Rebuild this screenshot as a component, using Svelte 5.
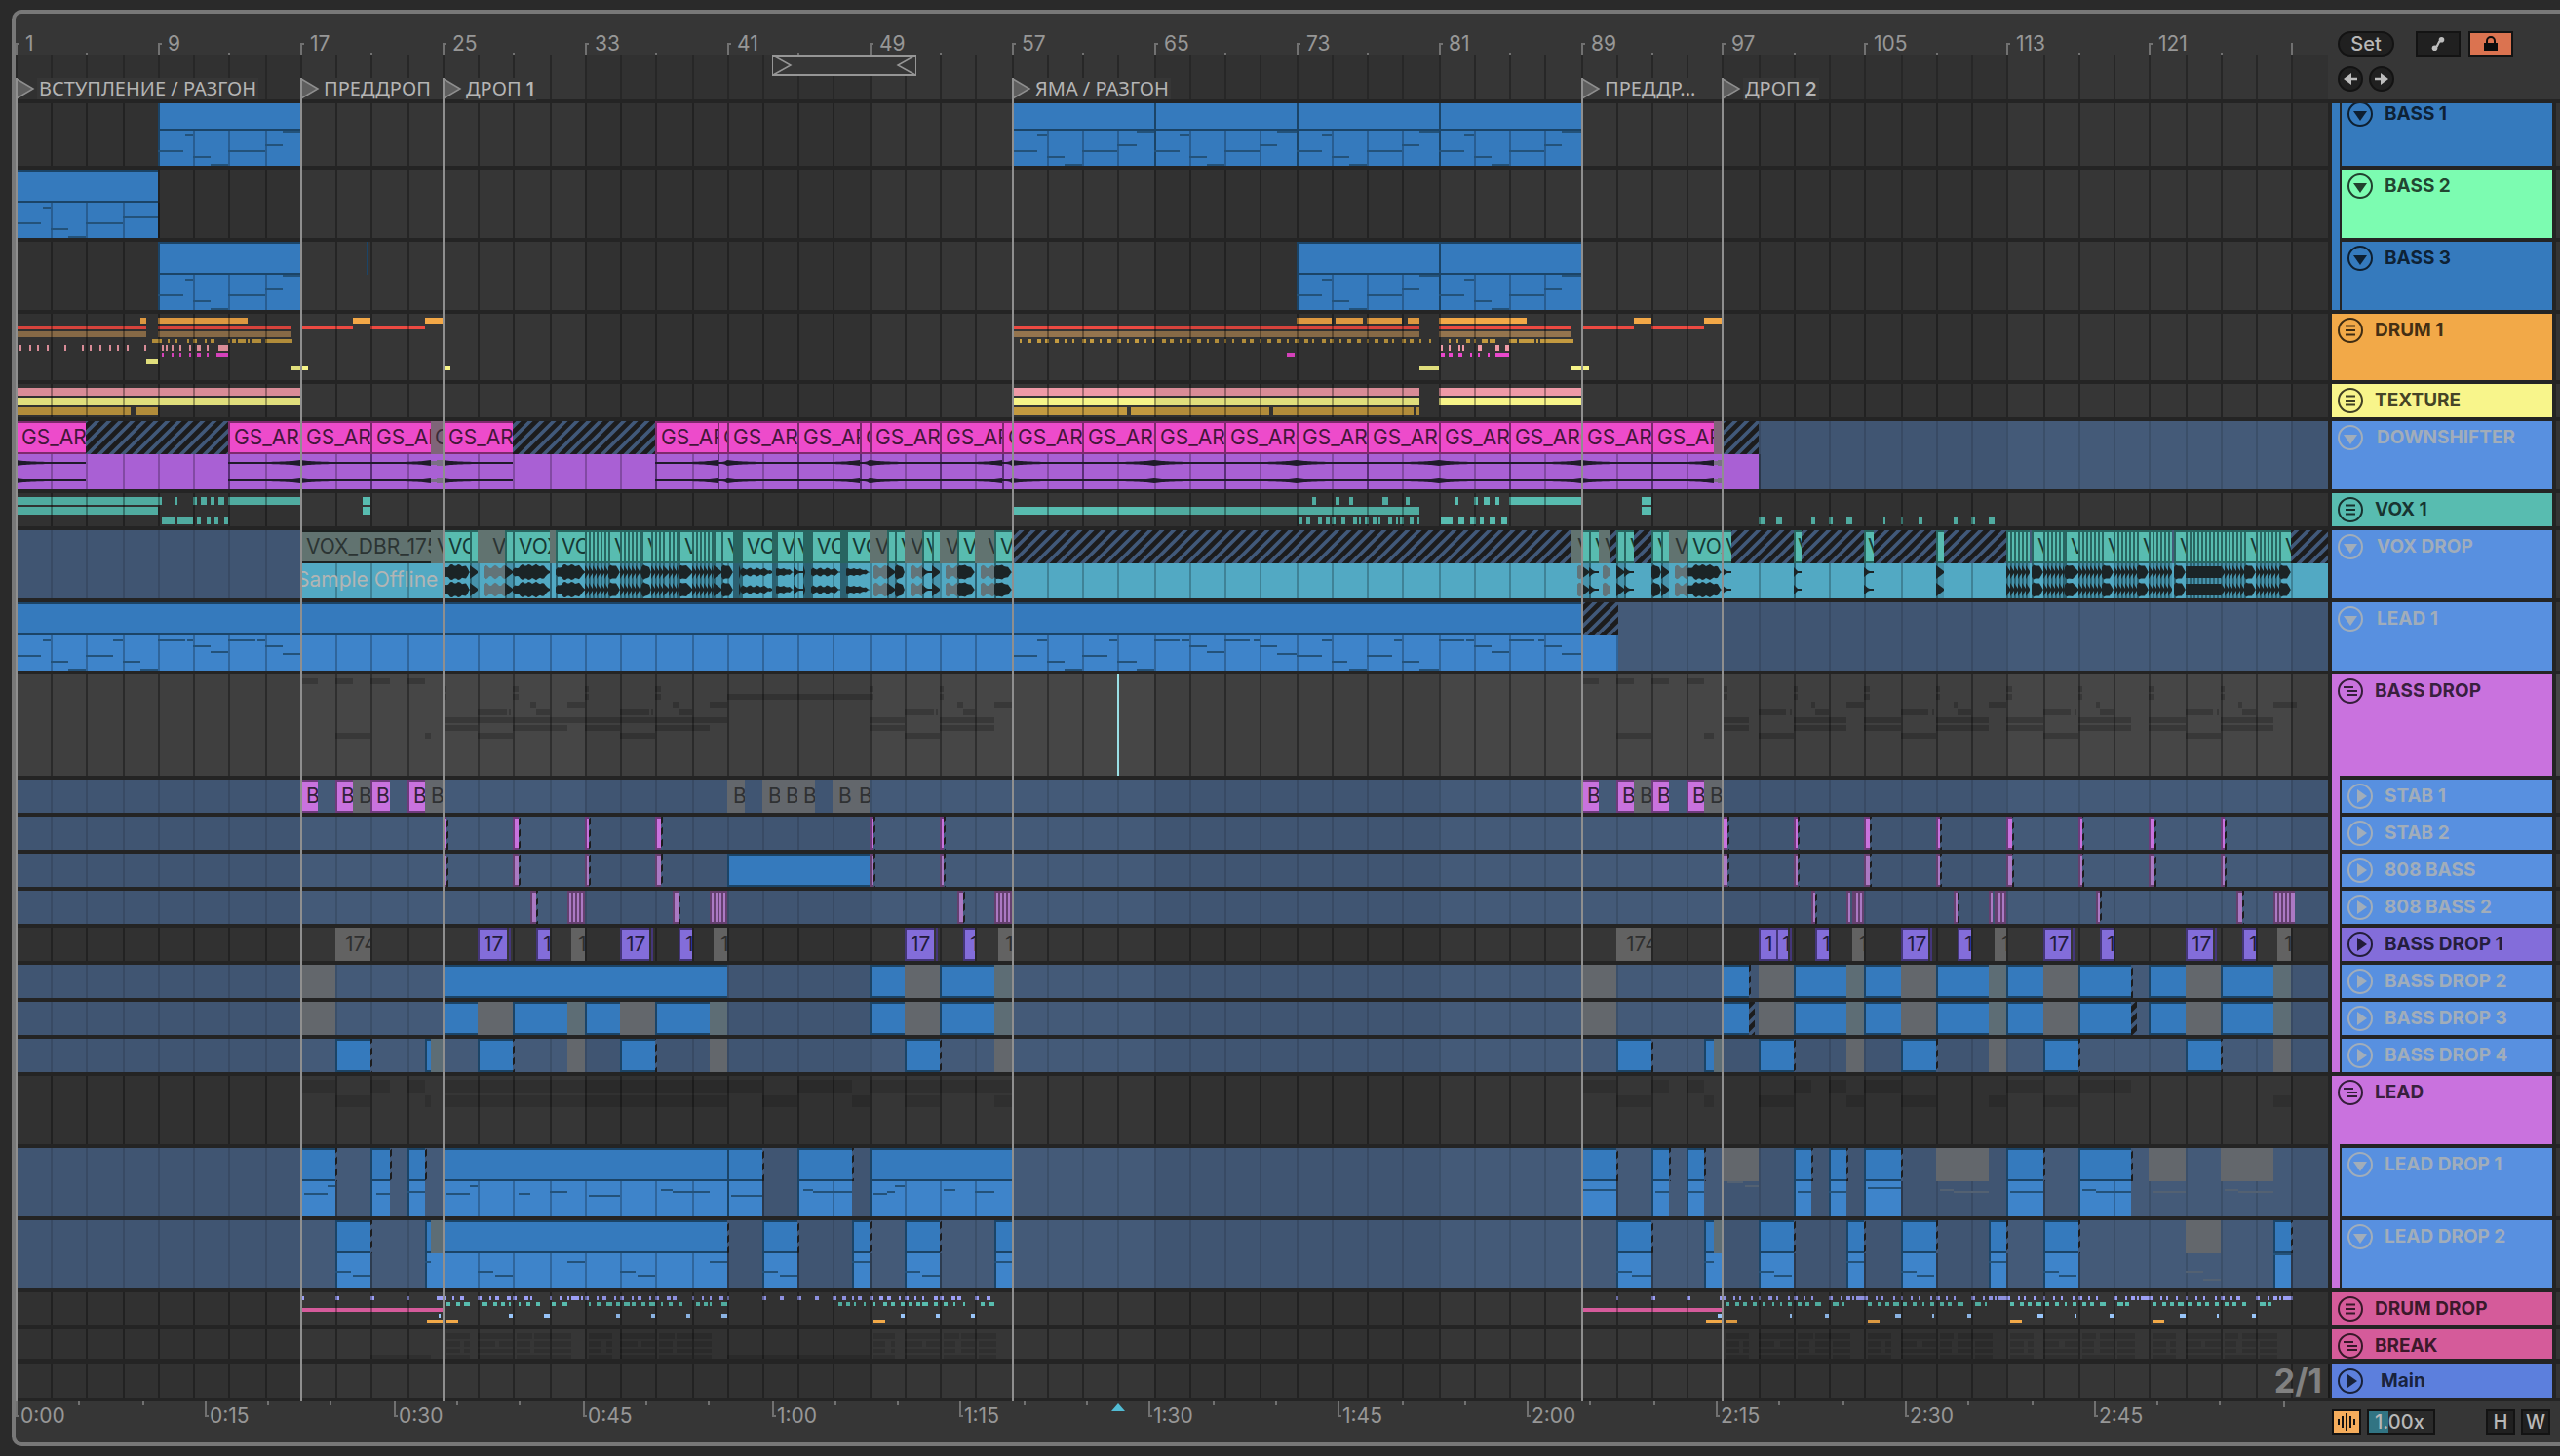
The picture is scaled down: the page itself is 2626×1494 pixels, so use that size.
<script lang="ts">
    type Span = [number, number];
    type Clip = [number, number, string, string?, number?];
    type Note = [number, number, number];
    type Layer = { y: number; h: number; color: string; spans: Span[] };
    type Lane = {
        name: string;
        icon: "fold" | "play" | "drums" | "group";
        color: string;
        h: number;
        parent?: string;
        joined?: boolean;
        frozen?: boolean;
        crop?: number;
        base?: string;
        layers?: Layer[];
        clips?: Clip[];
        bodies?: Span[];
        body?: string;
        notes?: Note[];
        ghosts?: Note[];
        wave?: "sweep" | "vox";
    };

    const BARS = 130;
    const BLUE = "#357abd";
    const FROZEN = "#5890e0";
    const ORCHID = "#c972de";
    const SHADE = "rgba(0,0,0,.19)";
    const FAINT = "rgba(0,0,0,.12)";
    const DARK_ZONES: Span[] = [[0, 16], [32, 48], [64, 80], [96, 112], [128, 130]];

    const kinds: Record<string, { fill: string; edge?: string; text?: string }> = {
        blue: { fill: BLUE, edge: "#1b4467" },
        pink: { fill: "#ed4bcb", edge: "#7e2a6d", text: "#43163a" },
        mauve: { fill: "#7f6579", text: "#3a2c38" },
        teal: { fill: "#58bcb0", edge: "#286560", text: "#163833" },
        dark: { fill: "#286560" },
        ash: { fill: "#617370", text: "#2b3433" },
        off: { fill: "#617370", edge: "#1d2221", text: "#2b3433" },
        orchid: { fill: ORCHID, edge: "#6d3b7b", text: "#33203a" },
        plum: { fill: "#ab79c3", edge: "#64406f" },
        violet: { fill: "#836dda", edge: "#44367a", text: "#231c3c" },
        tail: { fill: "#44367a" },
        grey: { fill: "#63676c", text: "#2f3133" },
        slate: { fill: "#5d6d75" },
        plain: { fill: "#626262", text: "#2f2f2f" },
        hatch: { fill: "url(#hatch)" },
        line: { fill: "#1b4467" },
    };

    let laneWidth = $state(2372);
    let rate = $state("1.00x");
    const perBar = $derived((laneWidth - 1) / BARS);
    const X = (t: number) => 2 * Math.floor((1 + t * perBar) / 2 + 0.01);
    const W = (a: number, b: number) => Math.max(2, X(b) - X(a));

    const evens = (a = 0, b = BARS) => {
        const out: number[] = [];
        for (let t = Math.ceil(a / 2) * 2; t <= b; t += 2) out.push(t);
        return out;
    };
    const dots = (starts: number[], w = 0.2): Span[] => starts.map((s) => [s, s + w]);
    const shift = (spans: Span[], by: number): Span[] => spans.map(([a, b]) => [a + by, b + by]);
    const shiftNotes = (notes: Note[], by: number): Note[] => notes.map(([a, b, y]) => [a + by, b + by, y]);
    const every4 = (w: number): Span[] => [96, 100, 104, 108, 112, 116, 120, 124].map((s) => [s, s + w]);

    const locators = [
        { t: 0, name: "ВСТУПЛЕНИЕ / РАЗГОН" },
        { t: 16, name: "ПРЕДДРОП" },
        { t: 24, name: "ДРОП", num: "1" },
        { t: 56, name: "ЯМА / РАЗГОН" },
        { t: 88, name: "ПРЕДДР..." },
        { t: 96, name: "ДРОП", num: "2" },
    ];
    const seconds = Array.from({ length: 37 }, (_, i) => i * 5);
    const clock = (s: number) => `${Math.floor(s / 60)}:${String(s % 60).padStart(2, "0")}`;

    // bass riff, eight bars
    const riff: Note[] = [
        [0, 1.45, 54], [1.5, 2, 38], [2, 3, 60], [3, 4, 68], [4, 6, 54], [6, 7, 48], [7, 8, 34],
    ];
    const leadRiff: Note[] = [
        [0, 1.45, 54], [1.5, 2, 38], [2, 2.95, 60], [3, 4, 68], [4, 5.45, 54], [5.5, 6, 38], [6, 7, 60], [7, 8, 68],
        [8, 9.5, 38], [9.6, 10, 38], [10, 11, 44], [11, 12, 50], [12, 13.45, 38], [13.6, 14, 38], [14, 15, 44], [15, 16, 52],
    ];

    function sweepClips(): Clip[] {
        const out: Clip[] = [[0, 4, "pink", "GS_AR"], [4, 12, "hatch"], [12, 16, "pink", "GS_ARC"], [16, 20, "pink", "GS_AR"],
            [20, 23.4, "pink", "GS_AR"], [23.4, 24, "mauve", "C", 4], [24, 28, "pink", "GS_AR"], [28, 36, "hatch"],
            [36, 39.5, "pink", "GS_AR"], [39.5, 40, "pink", "G"], [40, 44, "pink", "GS_AR"], [44, 47.5, "pink", "GS_AR"],
            [47.5, 48, "pink", "G"], [48, 52, "pink", "GS_AR"], [52, 55.5, "pink", "GS_AR"], [55.5, 56, "pink", "G"]];
        for (let t = 56; t < 92; t += 4) out.push([t, t + 4, "pink", "GS_ARC"]);
        out.push([92, 95.5, "pink", "GS_AR"], [95.5, 96, "mauve"], [96, 98, "hatch"]);
        return out;
    }

    // short slices between two bars
    function chop(a: number, b: number, step = 0.22): Clip[] {
        const out: Clip[] = [];
        for (let t = a; t < b - 0.05; t += step) out.push([t, Math.min(t + step, b), "teal"]);
        return out;
    }

    function voxClips(): Clip[] {
        const out: Clip[] = [
            [16, 23.4, "off", "VOX_DBR_175"], [23.4, 24, "ash", "V"],
            [24, 25.55, "teal", "VO"], [25.55, 26, "teal"], [26, 27.5, "ash", "V", 15], [27.5, 28, "teal"],
            [28, 30, "teal", "VOX"], [30, 30.1, "dark"], [30.1, 30.35, "ash"], [30.35, 32, "teal", "VO"],
            ...chop(32, 33.3), [33.3, 34, "teal", "V"], ...chop(34, 35.2), [35.2, 35.8, "teal", "V"],
            ...chop(35.8, 37.3), [37.3, 38, "teal", "V"], ...chop(38, 39.3), [39.3, 39.7, "teal"], [39.7, 40.3, "teal", "V"],
            [40.3, 40.65, "dark"], [40.65, 40.8, "teal"], [40.8, 42.5, "teal", "VO"], [42.5, 42.8, "dark"],
            [42.8, 43.75, "teal", "V"], [43.75, 44.25, "teal", "V", 4], [44.25, 44.45, "teal"], [44.45, 44.75, "dark"],
            [44.75, 46.35, "teal", "VO"], [46.35, 46.7, "dark"], [46.7, 48, "teal", "VO"], [48, 49, "ash", "V"],
            [49, 49.45, "teal"], [49.45, 50, "teal", "V"], [50, 51, "ash", "V"], [51, 51.5, "teal", "V", 4], [51.5, 52, "teal"],
            [52, 53, "ash", "V"], [53, 53.9, "teal", "V"], [53.9, 54, "dark"], [54, 55, "ash", "V", 13], [55, 56, "teal", "V"],
            [56, 87.5, "hatch"], [87.5, 88, "ash", "V"], [88, 88.5, "teal"], [88.5, 89, "teal", "V"], [89, 89.7, "ash", "V"],
            [89.7, 90, "hatch"], [90, 90.5, "teal"], [90.5, 91, "teal", "V"], [91, 92, "hatch"], [92, 92.55, "teal", "V"],
            [92.55, 93, "teal"], [93, 93.95, "ash", "V"], [94, 96, "teal", "VOX"], [96, 96.5, "teal", "V", 4],
            [96.5, 100, "hatch"], [100, 100.5, "teal", "V", 4], [100.5, 104, "hatch"], [104, 104.5, "teal", "V", 4],
            [104.5, 108, "hatch"], [108, 108.4, "teal"], [108.4, 112, "hatch"],
        ];
        for (let t = 112; t < 128; t += 4) {
            out.push(...chop(t, t + 1.35), [t + 1.35, t + 2, "teal", "V"]);
            if (t === 120) out.push(...chop(t + 2, t + 4));
            else out.push(...chop(t + 2, t + 3.3), [t + 3.3, t + 4, "teal", "V"]);
        }
        out.push([128, 130, "hatch"]);
        return out;
    }

    // two channel outline, mirrored around each centre line
    function outline(a: number, b: number, amp: (p: number, i: number) => number) {
        const x0 = X(a);
        const x1 = X(b);
        let d = "";
        for (const cy of [43, 61]) {
            const top: string[] = [];
            const low: string[] = [];
            for (let x = x0, i = 0; x <= x1; x += 2, i++) {
                const h = amp((x - x0) / Math.max(2, x1 - x0), i);
                top.push(`${x} ${(cy - h).toFixed(1)}`);
                low.unshift(`${x} ${(cy + h).toFixed(1)}`);
            }
            d += `M${top.join("L")}L${low.join("L")}Z`;
        }
        return d;
    }
    function sweep([a, b]: Clip) {
        const rising = Math.floor(a / 4) % 2 === 1;
        return outline(a, b, (p) => 1 + 2 * Math.pow(rising ? p : 1 - p, 5));
    }
    function vox([a, b, kind, label]: Clip) {
        const loud = a >= 40 && a < 48 ? 3.5 : 7.2;
        if (kind === "ash") return outline(a + 0.3, b, (_, i) => 5.5 + 1.8 * Math.sin(i * 1.3));
        if (!label && a >= 122 && a < 124) return outline(a, b, () => 6);
        if (!label) return outline(a, b, (p) => Math.max(1, 7 * (1 - p * 0.85)));
        if (b - a > 1.5) return outline(a, b, (p, i) => Math.min(loud, 2.5 + p * 18) * (1 - Math.pow(p, 9)) + 1.1 * Math.sin(i * 1.7));
        if (b - a <= 0.5) return outline(a, b, (p) => Math.max(1, 5 * (1 - p * 1.6)));
        return outline(a, b, (p, i) => Math.min(loud, 5 + p * 12) * (1 - Math.pow(p, 4)) + 0.7 * Math.sin(i * 2));
    }

    function voicedBars(): Clip[] {
        const both: Clip[] = [
            [48, 50, "blue"], [50, 52, "grey"], [52, 55, "blue"], [55, 56, "slate"], [88, 90, "grey"],
            [96, 97.5, "blue"], [98, 100, "grey"], [100, 103, "blue"], [103, 104, "slate"], [104, 106, "blue"],
            [106, 108, "grey"], [108, 111, "blue"], [111, 112, "slate"], [112, 114, "blue"], [114, 116, "grey"],
            [116, 119, "blue"], [120, 122, "blue"], [122, 124, "grey"], [124, 127, "blue"], [127, 128, "slate"],
        ];
        return both;
    }
    const stabs = (kind: string): Clip[] => {
        const narrow = [24, 32, 48, 52, 100, 108, 116, 124];
        const wide = [28, 36, 96, 104, 112, 120];
        return [
            ...narrow.flatMap((t): Clip[] => [[t, t + 0.23, kind], [t + 0.23, t + 0.32, "hatch"]]),
            ...wide.flatMap((t): Clip[] => [[t, t + 0.33, kind], [t + 0.33, t + 0.43, "hatch"]]),
        ];
    };
    const rolls = [31, 39, 55, 103, 111, 127].flatMap((t): Clip[] =>
        [0, 0.25, 0.45, 0.67, 0.89].map((o): Clip => [t + o, t + (o === 0.89 ? (t === 127 ? 1.2 : 1) : o + 0.22), "plum"]),
    );
    const hits = [29, 37, 53, 101, 109, 117, 125].flatMap((t): Clip[] => [[t - 0.05, t + 0.25, "plum"], [t + 0.25, t + 0.33, "hatch"]]);

    function dropOne(): Clip[] {
        const out: Clip[] = [[18, 20, "plain", "174", 10], [90, 92, "plain", "174", 10]];
        for (const t of [26, 34, 50, 106, 114, 122]) out.push([t, t + 1.6, "violet", "17"], [t + 1.72, t + 1.82, "tail"]);
        out.push([98, 99, "violet", "1"], [99, 99.65, "violet", "1"], [99.75, 99.85, "tail"]);
        for (const t of [29.25, 37.25, 53.25, 101.25, 109.25, 117.25, 125.25]) out.push([t, t + 0.75, "violet", "1", 7]);
        for (const t of [31.25, 39.25, 55.25, 103.25, 111.25, 127.25]) out.push([t, t + 0.75, "plain", "1", 7]);
        return out;
    }

    const endHatch = (spans: Span[]): Clip[] => spans.flatMap(([a, b]): Clip[] => [[a, b, "blue"], [b, b + 0.1, "hatch"]]);
    const lead1: Span[] = [[16, 18], [20, 21.05], [22, 23], [24, 40], [40, 42], [44, 47], [48, 56], [88, 90], [92, 93], [94, 95],
        [100, 101], [102, 103], [104, 106], [112, 114], [116, 119]];
    const lead2: Span[] = [[18, 20], [24, 40], [42, 44], [47, 48], [50, 52], [55, 56], [90, 92], [98, 100], [103, 104],
        [106, 108], [111, 112], [114, 116], [127, 128]];
    const pairs: Note[] = [18, 26, 34, 42, 50, 90, 98, 106, 114].flatMap((t): Note[] => [[t, t + 0.9, 52], [t + 0.95, t + 1.95, 56]]);

    // percussion hits repeated over the second drop
    const kick: Span[] = [[0, 0.2], [0.6, 0.75], [0.95, 1.1], [1.55, 1.65], [2, 2.1], [2.55, 2.75], [3, 3.1], [3.65, 3.8], [4, 4.2],
        [4.6, 4.7], [4.95, 5.15], [6, 6.2], [6.6, 6.8], [6.95, 7.15], [7.3, 7.4], [7.5, 8.1]];
    const hat: Span[] = [[0.2, 0.4], [0.7, 0.9], [1.15, 1.35], [1.65, 1.95], [2.2, 2.4], [2.75, 2.95], [3.2, 3.4], [3.7, 3.9],
        [4.2, 4.5], [4.7, 4.9], [5.2, 5.5], [6.2, 6.5], [6.7, 6.9]];
    const second = [96, 104, 112, 120];
    const blocks = [24, 32, 48, ...second];

    const groupBars: Span[] = [[96, 97.5], [100, 103], [104, 106], [108, 111], [112, 114], [116, 119], [120, 122], [124, 127]];

    const lanes: Lane[] = [
        {
            name: "BASS 1", icon: "fold", color: BLUE, h: 64, crop: 6, parent: BLUE,
            clips: [[8, 16, "blue"], [56, 64, "blue"], [64, 72, "blue"], [72, 80, "blue"], [80, 88, "blue"]],
            bodies: [[8, 16], [56, 64], [64, 72], [72, 80], [80, 88]], body: BLUE,
            notes: [8, 56, 64, 72, 80].flatMap((t) => shiftNotes(riff, t)),
        },
        {
            name: "BASS 2", icon: "fold", color: "#7cfcb1", h: 70, parent: BLUE, joined: true,
            clips: [[0, 8, "blue"]], bodies: [[0, 8]], body: BLUE,
            notes: [...riff.slice(0, 5), [6, 8, 48]],
        },
        {
            name: "BASS 3", icon: "fold", color: BLUE, h: 70, parent: BLUE, joined: true,
            clips: [[8, 16, "blue"], [72, 80, "blue"], [80, 88, "blue"], [19.7, 19.8, "line"]],
            bodies: [[8, 16], [72, 80], [80, 88]], body: BLUE,
            notes: [8, 72, 80].flatMap((t) => shiftNotes(riff, t)),
        },
        {
            name: "DRUM 1", icon: "drums", color: "#f2a948", h: 68,
            layers: [
                { y: 4, h: 6, color: "#f3a847", spans: [[7, 7.4], [8, 13], [19, 20], [23, 24], [72, 74], [74.2, 75.8], [76, 78], [78.3, 79], [80, 85], [91, 92], [95, 96]] },
                { y: 12, h: 4, color: "#ed4a42", spans: [[0, 7.4], [8, 15.5], [16, 19], [20, 23], [56, 79], [80, 87.5], [88, 91], [92, 95]] },
                { y: 18, h: 6, color: "#94744e", spans: [[0, 7.4], [8, 15.5], [56, 79], [80, 87.5]] },
                {
                    y: 26, h: 4, color: "#c39a40",
                    spans: [[7.7, 8.2], [8.6, 8.7], [8.95, 9.15], [9.6, 9.7], [9.95, 10.15], [10.6, 10.8], [10.95, 11.15], [11.9, 12.1],
                        [12.2, 12.35], [12.45, 12.9], [13, 13.1], [13.25, 13.85], [14, 15.55],
                        ...Array.from({ length: 47 }, (_, k): Span => [56.45 + k / 2, 56.45 + k / 2 + (k % 3 ? 0.2 : 0.13)]),
                        [80.55, 80.75], [81, 81.1], [81.55, 81.75], [82, 82.1], [82.5, 82.75], [82.95, 83.2], [84, 84.4], [84.5, 84.6], [84.7, 85.4], [85.5, 85.6], [85.7, 87.6]],
                },
                {
                    y: 32, h: 6, color: "#ef9aa7",
                    spans: [...dots([0.17, 0.72, 1.17, 1.72, 2.72, 3.7, 4.22, 4.67, 5.22, 5.67, 6.22, 7.2, 8.17, 8.4, 8.72, 9.17, 9.72, 10.17, 10.35, 10.7], 0.11),
                        [11.35, 11.9], ...dots([80.2, 80.65, 81.2, 81.4, 82.2, 82.4], 0.11), [83.2, 83.5], [83.75, 84]],
                },
                {
                    y: 40, h: 4, color: "#ea48cd",
                    spans: [...dots([8.17, 8.72, 9.17, 9.72, 10.17, 10.7]), [11.25, 11.9], [71.5, 71.95], ...dots([80.2, 80.65, 81.2, 81.75, 82.2, 82.75]), [83.2, 84]],
                },
                { y: 46, h: 6, color: "#f7f489", spans: [[7.4, 8]] },
                { y: 54, h: 4, color: "#f7f489", spans: [[15.5, 16.4], [24, 24.4], [79, 80], [87.5, 88.5]] },
            ],
        },
        {
            name: "TEXTURE", icon: "drums", color: "#f8f58b", h: 34,
            layers: [
                { y: 4, h: 8, color: "#ef9aa7", spans: [[0, 16], [56, 79], [80, 88]] },
                { y: 14, h: 8, color: "#f7f489", spans: [[0, 16], [56, 79], [80, 88]] },
                { y: 24, h: 8, color: "#c39a40", spans: [[0, 6.5], [6.75, 8], [56, 62.55], [62.7, 70.55], [70.7, 78.6], [78.7, 79]] },
            ],
        },
        {
            name: "DOWNSHIFTER", icon: "fold", color: FROZEN, h: 70, frozen: true,
            clips: sweepClips(), bodies: [[0, 98]], body: "#a960d4", wave: "sweep",
        },
        {
            name: "VOX 1", icon: "drums", color: "#58bcb0", h: 34,
            layers: [
                {
                    y: 4, h: 8, color: "#58bcb0",
                    spans: [[0, 8.2], [8.95, 9.15], [9.95, 10.15], [10.45, 10.7], [10.95, 11.2], [11.45, 11.7], [12, 16], [19.5, 20],
                        ...dots([72.9, 74.2, 75, 76.9, 78.2, 80.9, 82, 82.6, 83.2], 0.25), [84, 88], [91.5, 92]],
                },
                { y: 14, h: 8, color: "#58bcb0", spans: [[0, 8], [19.5, 20], [56, 79], [91.5, 92]] },
                {
                    y: 24, h: 8, color: "#58bcb0",
                    spans: [[8.2, 8.95], [9.15, 9.95], [10.15, 10.45], [10.7, 10.95], [11.2, 11.45], [11.7, 12],
                        ...dots([72.2, 72.6, 73.3, 73.7, 74, 74.6, 75.2, 75.5, 75.9, 76.3, 76.6, 77.2, 77.6, 77.9, 78.4, 78.8], 0.2),
                        ...dots([80.2, 80.5, 81.2, 81.8, 82.3, 82.9, 83.6], 0.3),
                        [98, 98.4], [99, 99.4], [101, 101.2], [102, 102.2], [103, 103.3], [105, 105.2], [106, 106.2], [107, 107.2],
                        [109, 109.2], [110, 110.2], [111, 111.3]],
                },
            ],
        },
        {
            name: "VOX DROP", icon: "fold", color: FROZEN, h: 70, frozen: true,
            clips: voxClips(), bodies: [[16, 130]], body: "#52a9c3", wave: "vox",
        },
        {
            name: "LEAD 1", icon: "fold", color: FROZEN, h: 70, frozen: true,
            clips: [[0, 88, "blue"], [88, 90.1, "hatch"]], bodies: [[0, 90.1]], body: "#3e84ca",
            notes: [0, 56, 72].flatMap((t) => shiftNotes(leadRiff, t)),
        },
        {
            name: "BASS DROP", icon: "group", color: ORCHID, h: 104, base: "#464646",
            layers: [
                { y: 4, h: 6, color: SHADE, spans: [[16, 17], [18, 19], [20, 21], [22, 23], [88, 89], [90, 91], [92, 93], [94, 95]] },
                { y: 12, h: 6, color: SHADE, spans: [[24, 24.2], [28, 28.3], [32, 32.2], [36, 36.3], [48, 48.2], [52, 52.2], ...every4(0.25)] },
                { y: 20, h: 6, color: SHADE, spans: [[24, 24.2], [28, 28.3], [32, 32.2], [36, 36.3], [40, 48.2], [52, 52.2], ...every4(0.25)] },
                {
                    y: 28, h: 6, color: SHADE,
                    spans: [[28.9, 29.25], [31, 32], [36.9, 37.25], [39, 40], [52.95, 53.25], [55, 56], [101, 101.2], [103, 104], [109, 109.2],
                        [111, 112], [117, 117.2], [125, 125.2], [127, 128.3]],
                },
                {
                    y: 36, h: 6, color: SHADE,
                    spans: [[26, 27.6], [27.75, 27.85], [29.25, 30], [34, 35.6], [35.75, 35.85], [37.25, 38], [50, 51.6], [51.75, 51.85], [53.25, 54],
                        [98, 99.6], [99.75, 99.85], [101.2, 102], [106, 107.55], [107.75, 107.85], [109.2, 110], [114, 115.55], [115.75, 115.85],
                        [117.2, 118], [122, 123.55], [123.75, 123.85], [125.2, 126]],
                },
                { y: 44, h: 6, color: SHADE, spans: [[24, 40], [48, 50], [52, 55], ...groupBars] },
                { y: 52, h: 6, color: SHADE, spans: [[24, 26], [28, 31], [32, 34], [36, 39], [48, 50], [52, 55], ...groupBars] },
                { y: 60, h: 6, color: SHADE, spans: [[18, 20], [23, 23.4], [26, 28], [34, 36], [50, 52], [90, 92], [95, 95.5], [98, 100], [106, 108], [114, 116], [122, 124]] },
            ],
        },
        {
            name: "STAB 1", icon: "play", color: FROZEN, h: 34, frozen: true, parent: ORCHID, joined: true,
            clips: [[16, 17, "orchid", "B"], [18, 19, "orchid", "B"], [19, 20, "grey", "B"], [20, 21.1, "orchid", "B"], [22, 23, "orchid", "B"], [23, 24, "grey", "B"],
                [40, 41, "grey", "B"], [42, 43, "grey", "B"], [43, 44, "grey", "B"], [44, 45, "grey", "B"], [46, 47.1, "grey", "B"], [47.1, 48, "grey", "B", 5],
                [88, 89, "orchid", "B"], [90, 91, "orchid", "B"], [91, 92, "grey", "B"], [92, 93, "orchid", "B"], [94, 95, "orchid", "B"], [95, 96, "grey", "B"]],
        },
        { name: "STAB 2", icon: "play", color: FROZEN, h: 34, frozen: true, parent: ORCHID, joined: true, clips: stabs("orchid") },
        { name: "808 BASS", icon: "play", color: FROZEN, h: 34, frozen: true, parent: ORCHID, joined: true, clips: [[40, 48, "blue"], ...stabs("plum")] },
        { name: "808 BASS 2", icon: "play", color: FROZEN, h: 34, frozen: true, parent: ORCHID, joined: true, clips: [...hits, ...rolls] },
        { name: "BASS DROP 1", icon: "play", color: "#836dda", h: 34, parent: ORCHID, joined: true, clips: dropOne() },
        {
            name: "BASS DROP 2", icon: "play", color: FROZEN, h: 34, frozen: true, parent: ORCHID, joined: true,
            clips: [[16, 18, "grey"], [24, 40, "blue"], ...voicedBars(), [97.5, 97.6, "hatch"], [119, 119.1, "hatch"]],
        },
        {
            name: "BASS DROP 3", icon: "play", color: FROZEN, h: 34, frozen: true, parent: ORCHID, joined: true,
            clips: [[16, 18, "grey"], [24, 26, "blue"], [26, 28, "grey"], [28, 31, "blue"], [31, 32, "slate"], [32, 34, "blue"], [34, 36, "grey"],
                [36, 39, "blue"], [39, 40, "slate"], ...voicedBars(), [97.5, 97.8, "hatch"], [119, 119.3, "hatch"]],
        },
        {
            name: "BASS DROP 4", icon: "play", color: FROZEN, h: 34, frozen: true, parent: ORCHID, joined: true,
            clips: [...endHatch([[18, 20], [26, 28], [34, 36], [50, 52], [90, 92], [98, 100], [106, 108], [114, 116], [122, 124]]),
                [23, 23.4, "blue"], [23.4, 24, "slate"], [95, 95.5, "blue"], [95.5, 96, "slate"],
                [31, 32, "grey"], [39, 40, "grey"], [55, 56, "grey"], [103, 104, "grey"], [111, 112, "grey"], [127, 128, "grey"]],
        },
        {
            name: "LEAD", icon: "group", color: ORCHID, h: 70,
            layers: [
                { y: 4, h: 14, color: FAINT, spans: [[16, 18], [20, 21], [22, 23], [24, 42], [44, 47], [48, 56], [88, 90], [92, 93], [94, 95], [100, 101], [102, 103], [104, 106], [112, 114], [116, 119]] },
                { y: 20, h: 12, color: FAINT, spans: [[18, 20], [23, 23.4], [24, 40], [42, 44], [47, 48], [50, 52], [55, 56], [90, 92], [95, 95.5], [98, 100], [103, 104], [106, 108], [111, 112], [114, 116], [127, 128]] },
            ],
        },
        {
            name: "LEAD DROP 1", icon: "fold", color: FROZEN, h: 70, frozen: true, parent: ORCHID, joined: true,
            clips: [...endHatch(lead1), [96, 98, "grey"], [108, 111, "grey"], [120, 122, "grey"], [124, 127, "grey"]],
            bodies: lead1, body: "#3e84ca",
            notes: [[16.2, 17.5, 46], [17.5, 18, 38], [20.25, 21, 46], [22, 23, 44], [24.2, 25.5, 46], [25.5, 26, 38], [28.25, 28.9, 46],
                [30, 31, 44], [32.2, 34, 48], [36.25, 36.9, 42], [36.9, 39, 44], [40.2, 42, 48], [44.25, 44.9, 42], [44.9, 47, 44],
                [48.2, 49, 46], [49, 49.4, 44], [49.4, 50, 38], [52.2, 52.9, 42], [54, 55, 44], [88.2, 90, 42], [92.2, 93, 44], [94, 95, 44],
                [100.2, 101, 44], [102, 103, 44], [104.2, 106, 40], [112.2, 114, 44], [116.2, 117, 42], [117, 119, 44]],
            ghosts: [[96.3, 97.2, 34], [97.3, 98, 38], [108.2, 109, 42], [109, 111, 44], [120.2, 122, 44], [124.2, 125, 42], [125, 127, 44]],
        },
        {
            name: "LEAD DROP 2", icon: "fold", color: FROZEN, h: 70, frozen: true, parent: ORCHID, joined: true,
            clips: [...endHatch(lead2), [23, 23.4, "blue"], [23.4, 24, "slate"], [95, 95.5, "blue"], [95.5, 96, "slate"], [122, 124, "grey"]],
            bodies: [...lead2, [23, 24], [95, 96]], body: "#3e84ca",
            notes: [...pairs, [23, 23.4, 42], [31, 32, 42], [39, 40, 42], [47, 48, 42], [55, 56, 42], [95, 95.5, 42], [103, 104, 42], [111, 112, 42], [127, 128, 34]],
            ghosts: [[122, 123, 52], [123, 124, 60]],
        },
        {
            name: "DRUM DROP", icon: "drums", color: "#d55b9a", h: 34,
            layers: [
                {
                    y: 4, h: 4, color: "#9c9ff5",
                    spans: [...dots([16, 18, 20, 24, 25, 26, 27, 27.6, 28, 28.6, 28.9, 30.55, 32, 33, 34, 34.95, 35.6, 36, 36.6, 36.95, 38.55, 39.6, 42, 43, 44, 45, 46, 46.5, 47.4, 48, 48.55, 49, 50, 50.95, 51.65, 52, 52.65, 52.95, 54, 54.65]),
                        ...dots([22, 24.6, 26.6, 30, 31, 31.75, 32.65, 33.65, 34.6, 38, 39, 40, 47, 49.65, 50.6], 0.11), [23.7, 24], [31.2, 31.65],
                        [88, 88.1], [90, 90.1], [92, 92.2], [94, 94.2], [95.8, 96.1], ...second.flatMap((t) => shift(kick, t))],
                },
                {
                    y: 10, h: 4, color: "#58bcae",
                    spans: [...dots([24.2, 24.75, 26.9, 27.3, 27.7, 28.25, 28.75, 29.25, 30.2, 32.2, 32.65, 33.8, 34.7, 35.2, 36.25, 36.7, 37.25, 38.25, 38.7, 39, 46.25, 46.7, 47.1, 47.65, 48.2, 48.8, 49.25, 49.75, 50.2, 50.65, 51.65, 52.2, 52.7, 53.25, 54.25]),
                        [25.2, 25.5], [26.2, 26.5], [30.7, 31], [33.2, 33.55], [34.2, 34.5], [35.6, 35.95], [39.7, 40], [51, 51.3], [54.7, 55],
                        ...second.flatMap((t) => shift(hat, t))],
                },
                { y: 16, h: 4, color: "#d55b9b", spans: [[16, 24], [88, 96]] },
                {
                    y: 22, h: 4, color: "#98c4f8",
                    spans: [...dots([23.75, 27.75, 33.75, 35.75, 37.75, 49.75, 51.75, 53.75, 95.75, 99.75, 101.75, 107.75, 109.75, 115.75, 117.75, 123.75, 125.75]),
                        [29.7, 30], [39.7, 40], [105.7, 106], [113.7, 114], [121.7, 122]],
                },
                { y: 28, h: 4, color: "#f2a948", spans: [[23.1, 24], [24.2, 24.85], [48.2, 48.9], [95.1, 96], [96.2, 96.8], [104.2, 104.8], [112.2, 112.8], [120.2, 120.8]] },
            ],
        },
        {
            name: "BREAK", icon: "group", color: "#d55b9a", h: 30,
            layers: [
                { y: 4, h: 6, color: FAINT, spans: blocks.flatMap((t) => shift([[0.2, 1.5], [2, 4], [4.2, 5.05], [5.2, 7.2]], t)) },
                { y: 12, h: 6, color: FAINT, spans: blocks.flatMap((t) => shift([[0.2, 0.95], [1.2, 1.5], [2, 2.95], [3.2, 4], [4.2, 4.9], [5.2, 6], [6.2, 7.2]], t)) },
                { y: 20, h: 4, color: FAINT, spans: blocks.flatMap((t) => shift([[0.2, 0.95], [1.2, 1.5], [2, 4], [4.2, 4.9], [5.2, 6], [6.2, 7.2]], t)) },
                { y: 26, h: 4, color: FAINT, spans: [[20, 23.4], [40, 48], ...blocks.flatMap((t) => shift([[0.2, 1.5], [2, 4], [4.2, 6], [6.2, 7.2]], t))] },
            ],
        },
    ];
</script>

{#snippet zones(y: number, h: number)}
    {#each DARK_ZONES as [a, b]}
        <rect x={X(a)} {y} width={b === BARS ? laneWidth - X(a) : W(a, b)} height={h} fill="rgba(0,0,0,.09)" />
    {/each}
{/snippet}

{#snippet grid(y: number, h: number, fill: string, a = 0, b = BARS)}
    {#each evens(a, b) as t}
        <rect x={X(t)} {y} width="2" height={h} {fill} />
    {/each}
{/snippet}

{#snippet trackIcon(icon: string)}
    <svg viewBox="-13 -13 26 26" width="26" height="26" aria-hidden="true">
        <circle r="12" fill="none" stroke="currentColor" stroke-width="2" />
        {#if icon === "fold"}
            <path d="M-7 -3H7L0 7Z" fill="currentColor" />
        {:else if icon === "play"}
            <path d="M-3 -7V7L7 0Z" fill="currentColor" />
        {:else if icon === "drums"}
            <path d="M-5 -4.5H5M-5 0H5M-5 4.5H5" stroke="currentColor" stroke-width="2" />
        {:else}
            <path d="M-7 -4H3M-3 0H7M-3 4H7" stroke="currentColor" stroke-width="2" />
        {/if}
    </svg>
{/snippet}

<svg class="defs" width="0" height="0" aria-hidden="true">
    <defs>
        <pattern id="hatch" width="12" height="12" patternUnits="userSpaceOnUse">
            <rect width="12" height="12" fill="#1c1c1d" />
            <path d="M-3 3L3 -3M-1 13L13 -1M9 15L15 9" stroke="#41597a" stroke-width="3.6" shape-rendering="auto" />
        </pattern>
    </defs>
</svg>

<main class="window">
    <div class="arrangement">
        <header class="top">
            <div class="ruler" bind:clientWidth={laneWidth}>
                <svg width="100%" height="88" shape-rendering="crispEdges">
                    {@render zones(42, 46)}
                    {@render grid(42, 46, "#272727")}
                    {#each evens().filter((t) => t % 4 === 0) as t}
                        {#if t % 8 === 0}
                            <rect x={X(t)} y="30" width="2" height="12" fill="#717171" />
                            {#if t < 128}
                                <rect x={X(t)} y="30" width="4" height="2" fill="#717171" />
                                <text class="num" x={X(t) + 10} y="38">{t + 1}</text>
                            {/if}
                        {:else}
                            <rect x={X(t)} y="40" width="2" height="2" fill="#717171" />
                        {/if}
                    {/each}
                    <g fill="#363636" stroke="#969696" shape-rendering="auto">
                        <rect x={X(42.55) + 1} y="43" width={X(50.65) - X(42.55) - 2} height="20" stroke-width="2" />
                        <path d="M{X(42.55) + 1} 43l18 10l-18 10M{X(50.65) - 1} 43l-18 10l18 10" stroke-width="1.5" />
                    </g>
                </svg>
                {#each locators as l}
                    <button class="locator" style:left="{X(l.t)}px">
                        <svg width="20" height="22" aria-hidden="true">
                            <path d="M1 1L18 11L1 21Z" fill="#5e5e5e" stroke="#8f8f8f" stroke-width="1.5" />
                        </svg>
                        <span>{l.name}{#if l.num}{" "}<b>{l.num}</b>{/if}</span>
                    </button>
                {/each}
            </div>
            <div class="tools">
                <div class="tool-row">
                    <button class="pill">Set</button>
                    <button class="square auto" aria-label="Automation mode">
                        <svg width="16" height="16" viewBox="0 0 16 16" aria-hidden="true">
                            <path d="M4.5 12Q7.500 10.500 8 8T11.500 4" fill="none" stroke="#bdbdbd" stroke-width="2.200" />
                            <circle cx="4.500" cy="12.200" r="2.800" fill="#bdbdbd" />
                            <circle cx="11.500" cy="3.800" r="2.800" fill="#bdbdbd" />
                        </svg>
                    </button>
                    <button class="square lock" aria-label="Lock envelopes">
                        <svg width="16" height="16" viewBox="0 0 16 16" aria-hidden="true">
                            <path d="M4 8V5a4 4 0 0 1 8 0V8" fill="none" stroke="#0c0c0c" stroke-width="2" />
                            <rect x="1" y="7" width="14" height="8" fill="#0c0c0c" />
                        </svg>
                    </button>
                </div>
                <div class="tool-row">
                    <button class="round" aria-label="Previous locator">
                        <svg width="16" height="14" viewBox="0 0 16 14" aria-hidden="true"><path d="M1 7L9 1V5.800H15V8.200H9V13Z" fill="#bdbdbd" /></svg>
                    </button>
                    <button class="round" aria-label="Next locator">
                        <svg width="16" height="14" viewBox="0 0 16 14" aria-hidden="true"><path d="M15 7L7 1V5.800H1V8.200H7V13Z" fill="#bdbdbd" /></svg>
                    </button>
                </div>
            </div>
        </header>

        <div class="tracks">
            {#each lanes as lane}
                <section class="track" class:group-row={lane.base} style:height="{lane.h}px">
                    <svg class="lane" height={lane.h} shape-rendering="crispEdges">
                        <rect width="100%" height="100%" fill={lane.base ?? (lane.frozen ? "#445a78" : "#363636")} />
                        {#if lane.layers}
                            {#each lane.layers as layer}
                                {#each layer.spans as [a, b]}
                                    <rect x={X(a)} y={layer.y} width={W(a, b)} height={layer.h} fill={layer.color} />
                                {/each}
                            {/each}
                            {@render zones(0, lane.h)}
                            {@render grid(0, lane.h, "rgba(0,0,0,.32)")}
                            {#if lane.name === "BASS DROP"}
                                <rect x={X(62)} y="0" width="2" height={lane.h} fill="#9ae0e6" />
                            {/if}
                        {:else}
                            {#if lane.frozen}
                                <g opacity=".5">{@render zones(0, lane.h)}</g>
                            {:else}
                                {@render zones(0, lane.h)}
                            {/if}
                            {@render grid(0, lane.h, lane.frozen ? "rgba(0,0,0,.12)" : "rgba(0,0,0,.3)")}
                            <g transform="translate(0 {-(lane.crop ?? 0)})">
                                {#each lane.bodies ?? [] as [a, b]}
                                    <rect x={X(a)} y="34" width={W(a, b)} height="36" fill={lane.body} />
                                    {@render grid(34, 36, "rgba(0,0,0,.23)", a, b)}
                                    {#if !lane.wave}
                                        <rect x={X(a)} y="34" width="2" height="36" fill="#1b4467" />
                                    {/if}
                                {/each}
                                {#each lane.notes ?? [] as [a, b, y]}
                                    <rect x={X(a)} {y} width={W(a, b)} height="2" fill="#23527a" />
                                {/each}
                                {#each lane.ghosts ?? [] as [a, b, y]}
                                    <rect x={X(a)} {y} width={W(a, b)} height="2" fill="#536172" />
                                {/each}
                                {#each lane.clips ?? [] as c}
                                    {@const k = kinds[c[2]]}
                                    <svg x={X(c[0])} y="0" width={W(c[0], c[1])} height="34">
                                        {#if k.edge}
                                            <rect width="100%" height="34" fill={k.edge} />
                                            <rect x="2" y="2" width="100%" height="30" fill={k.fill} />
                                        {:else if c[2] !== "hatch"}
                                            <rect width="100%" height="34" fill={k.fill} />
                                        {/if}
                                        {#if c[3]}
                                            <text class="clip-name" x={c[4] ?? 6} y="24" fill={k.text}>{c[3]}</text>
                                        {/if}
                                    </svg>
                                    {#if c[2] === "hatch"}
                                        <rect x={X(c[0])} y="0" width={W(c[0], c[1])} height="34" fill="url(#hatch)" />
                                    {/if}
                                    {#if lane.wave === "sweep" && c[2] === "pink"}
                                        {#if c[0] % 8 !== 0}
                                            <rect x={X(c[0])} y="34" width="2" height="36" fill="#5a2f78" />
                                        {/if}
                                        <path d={sweep(c)} fill="#1f1b2a" shape-rendering="auto" />
                                    {:else if lane.wave === "sweep" && c[2] === "mauve"}
                                        <path d={outline(c[0], c[1], (p) => 2 + p)} fill="#7a7085" />
                                    {:else if lane.wave === "vox" && c[2] === "teal"}
                                        {#if !c[3]}
                                            <rect x={X(c[0])} y="34" width={W(c[0], c[1])} height="36" fill="rgba(30,70,90,.22)" />
                                        {/if}
                                        <rect x={X(c[0])} y="34" width="2" height="36" fill="#2b6474" />
                                        <path d={vox(c)} fill="#1b2426" shape-rendering="auto" />
                                    {:else if lane.wave === "vox" && c[2] === "dark"}
                                        <rect x={X(c[0])} y="34" width={W(c[0], c[1])} height="36" fill="#2b5f70" />
                                    {:else if lane.wave === "vox" && c[2] === "ash" && c[0] !== 23.4}
                                        <path d={vox(c)} fill="#627479" shape-rendering="auto" />
                                    {/if}
                                {/each}
                                {#if lane.name === "VOX DROP"}
                                    <svg x={X(16)} y="34" width={W(16, 24)} height="36">
                                        <text class="offline" x="-4" y="24">Sample Offline</text>
                                    </svg>
                                {/if}
                            </g>
                        {/if}
                    </svg>
                    <div class="head" class:inactive={lane.frozen} class:child={lane.parent}>
                        {#if lane.parent}
                            <div class="strip" class:joined={lane.joined} style:background={lane.parent}></div>
                        {/if}
                        <div class="title" class:wide={!lane.parent && lane.icon === "fold"} class:cropped={lane.crop} style:background={lane.color}>
                            <button class="fold" aria-label="Unfold {lane.name}">{@render trackIcon(lane.icon)}</button>
                            <span>{lane.name}</span>
                        </div>
                    </div>
                    <div class="edge"></div>
                </section>
            {/each}
            <section class="track main-track">
                <svg class="lane" height="34" shape-rendering="crispEdges">
                    <rect width="100%" height="100%" fill="#363636" />
                    {@render zones(0, 34)}
                    {@render grid(0, 34, "rgba(0,0,0,.3)")}
                    <text class="fraction" x={laneWidth - 6} y="29" text-anchor="end">2/1</text>
                </svg>
                <div class="head">
                    <div class="title main-title">
                        <button class="fold" aria-label="Unfold Main">{@render trackIcon("play")}</button>
                        <span>Main</span>
                    </div>
                </div>
                <div class="edge"></div>
            </section>
        </div>

        <footer class="bottom">
            <svg class="times" height="42" shape-rendering="crispEdges">
                {#each seconds as s}
                    {@const x = X((s * 10.625) / 15)}
                    {#if s % 15 === 0 && s < 180}
                        <rect {x} y="0" width="2" height="16" fill="#717171" />
                        <rect {x} y="14" width="4" height="2" fill="#717171" />
                        <text class="num" x={x + 5} y="22">{clock(s)}</text>
                    {:else}
                        <rect {x} y="0" width="2" height={s === 180 ? 6 : 4} fill="#717171" />
                    {/if}
                {/each}
                <path d="M{X(62) + 1} 2l7 8h-14Z" fill="#52bcd4" shape-rendering="auto" />
            </svg>
            <div class="transport">
                <button class="mini warm" aria-label="Show waveforms">
                    <svg width="20" height="20" viewBox="0 0 20 20" aria-hidden="true">
                        <path d="M2 7V13M6 4V16M10 1V19M14 4V16M18 7V13" stroke="#111" stroke-width="2" />
                    </svg>
                </button>
                <input class="rate" aria-label="Playback rate" bind:value={rate} />
                <button class="mini push">H</button>
                <button class="mini">W</button>
            </div>
        </footer>

        <div class="lines">
            {#each locators as l}
                <i style:left="{X(l.t)}px"></i>
            {/each}
        </div>
    </div>
</main>

<style>
    :global(body) {
        margin: 0;
        background: #2a2a2a;
    }

    .defs {
        position: absolute;
    }

    .window {
        padding: 10px 0 10px 12px;
        font-family: Inter, "Noto Sans", sans-serif;
        font-size: 20px;
    }

    .arrangement {
        position: relative;
        border: 4px solid #787878;
        border-right: none;
        border-radius: 10px 0 0 10px;
        background: #363636;
    }

    svg {
        display: block;
    }

    button {
        display: flex;
        align-items: center;
        justify-content: center;
        box-sizing: border-box;
        padding: 0;
        border: none;
        background: none;
        color: inherit;
        font: inherit;
    }

    .top,
    .bottom {
        display: flex;
    }

    .ruler {
        position: relative;
        flex: 1;
        min-width: 0;
    }

    .num {
        font-size: 21px;
        fill: #979797;
    }

    .locator {
        position: absolute;
        top: 66px;
        gap: 2px;
        height: 22px;
        color: #b5b5b5;
        font-family: "Noto Sans", sans-serif;
        white-space: nowrap;
    }

    .locator span {
        padding: 0 2px;
        background: #363636;
        line-height: 22px;
    }

    .locator b {
        font-family: Inter, sans-serif;
        font-size: 19px;
        font-weight: 600;
    }

    .tools {
        display: flex;
        flex-direction: column;
        gap: 10px;
        flex: none;
        box-sizing: border-box;
        width: 238px;
        padding: 18px 0 0 10px;
    }

    .tool-row {
        display: flex;
        gap: 6px;
    }

    .pill,
    .square,
    .round {
        height: 26px;
        border: 2px solid #131313;
        background: #202020;
        color: #b8b8b8;
    }

    .pill {
        width: 58px;
        border-radius: 13px;
        font-weight: 500;
    }

    .square {
        width: 46px;
    }

    .auto {
        margin-left: 16px;
    }

    .lock {
        margin-left: 2px;
        background: #db7350;
    }

    .round {
        width: 26px;
        border-radius: 50%;
    }

    .tracks {
        display: flex;
        flex-direction: column;
        gap: 4px;
        padding: 4px 0;
        background: #242424;
    }

    .track {
        display: flex;
        gap: 4px;
    }

    .lane {
        flex: 1;
        min-width: 0;
    }

    .clip-name {
        font-size: 21px;
    }

    .offline {
        font-size: 21px;
        fill: #b3b5b4;
    }

    .fraction {
        font-size: 34px;
        font-weight: 700;
        fill: #818181;
    }

    .head {
        display: flex;
        gap: 2px;
        flex: none;
        width: 226px;
        color: rgba(0, 0, 0, 0.74);
    }

    .inactive {
        color: #a1adba;
    }

    .strip {
        flex: none;
        width: 8px;
    }

    .joined {
        margin-top: -4px;
    }

    .title {
        display: flex;
        align-items: flex-start;
        gap: 12px;
        flex: 1;
        overflow: hidden;
        padding-left: 6px;
        font-size: 19px;
        font-weight: 700;
        line-height: 34px;
        white-space: nowrap;
    }

    .title .fold {
        margin-top: 4px;
    }

    .wide {
        gap: 14px;
    }

    .cropped > * {
        position: relative;
        top: -6px;
    }

    .edge {
        flex: none;
        width: 4px;
        background: #343434;
    }

    .group-row .edge {
        background: #464646;
    }

    .main-track {
        height: 34px;
        margin-top: 2px;
    }

    .main-track .lane {
        overflow: visible;
    }

    .main-title {
        gap: 18px;
        background: #5c7fdd;
    }

    .times {
        flex: 1;
        min-width: 0;
    }

    .transport {
        display: flex;
        gap: 6px;
        flex: none;
        box-sizing: border-box;
        width: 238px;
        padding: 8px 10px 0 4px;
    }

    .mini,
    .rate {
        height: 26px;
        border: 2px solid #131313;
        background: #202020;
        color: #b8b8b8;
        font-weight: 500;
    }

    .mini {
        width: 30px;
    }

    .warm {
        background: #f5ad5c;
    }

    .push {
        margin-left: auto;
    }

    .rate {
        box-sizing: border-box;
        width: 70px;
        padding: 0 0 0 6px;
        border-radius: 0;
        background: linear-gradient(to right, #317483 20px, #2a2a2a 20px);
        font-family: inherit;
        font-size: 20px;
    }

    .lines {
        position: absolute;
        inset: 66px 0 42px 0;
        pointer-events: none;
    }

    .lines i {
        position: absolute;
        width: 2px;
        height: 100%;
        background: #8f8f8f;
    }
</style>
